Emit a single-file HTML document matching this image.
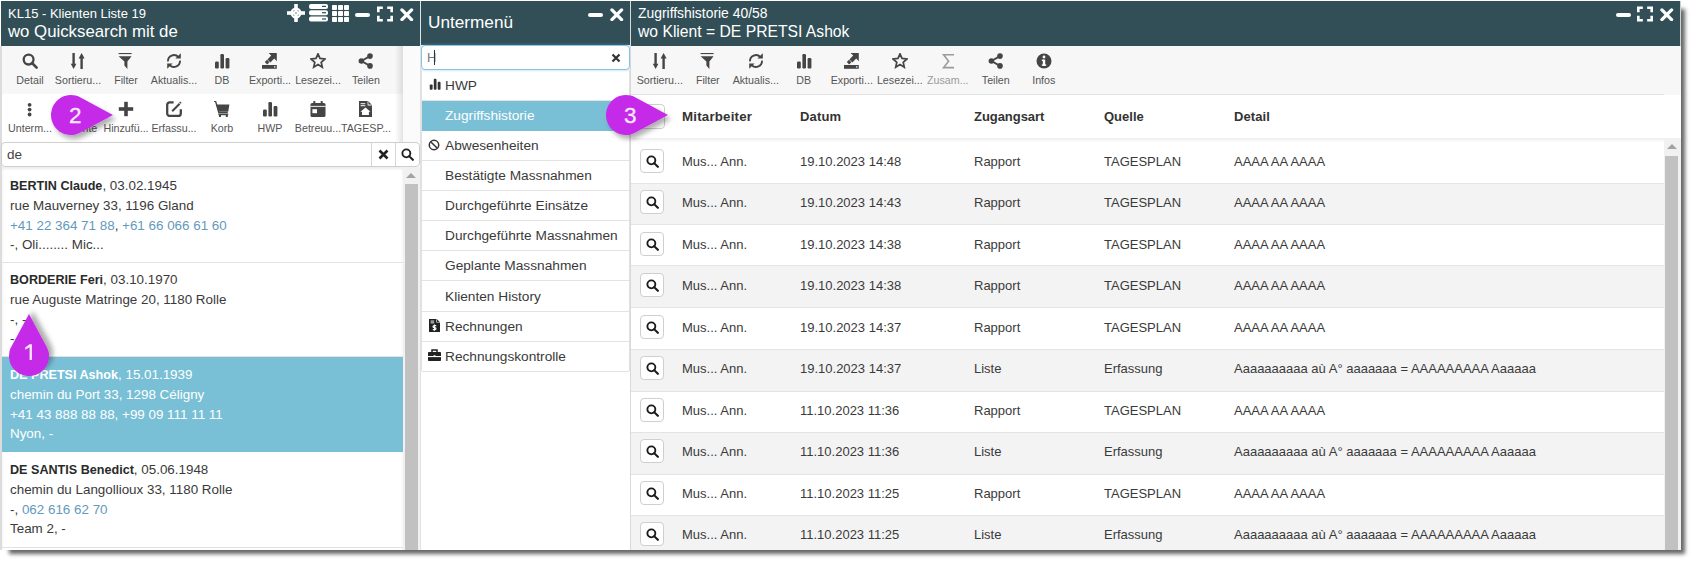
<!DOCTYPE html><html><head><meta charset="utf-8"><style>
*{box-sizing:border-box;margin:0;padding:0}
html,body{width:1696px;height:565px;overflow:hidden;background:#fff;font-family:"Liberation Sans",sans-serif}
.a{position:absolute}
.t{position:absolute;white-space:nowrap;line-height:1}
.lbl{position:absolute;width:60px;text-align:center;font-size:10.7px;line-height:12px;white-space:nowrap}
.li{position:absolute;left:10px;font-size:13.4px;line-height:19.4px;color:#3a3a3a;white-space:nowrap}
.li b{color:#2a2a2a;font-size:12.6px}
.lk{color:#6399bc}
.mi{position:absolute;left:0;width:207px;height:30.1px;border-bottom:1px solid #e3e3e3;font-size:13.7px;line-height:29px;color:#3a3a3a;padding-left:23px;white-space:nowrap}
.row{position:absolute;left:0;width:1034px;height:41.5px;border-bottom:1px solid #e4e4e4}
.cell{position:absolute;top:0;line-height:39px;font-size:13px;color:#3a3a3a;white-space:nowrap}
.btn{position:absolute;left:9px;top:6.8px;width:24px;height:24px;border:1px solid #cfcfcf;border-radius:4px;background:#fff}
.hd{position:absolute;top:0;line-height:43px;font-size:13.3px;font-weight:bold;color:#333;white-space:nowrap}
</style></head><body><div class="a" style="left:1px;top:1px;width:1680px;height:549px;box-shadow:6px 6px 4px -2px rgba(0,0,0,.6)"></div><div class="a" style="left:0;top:0;width:420px;height:550px;background:#fff;overflow:hidden"><div class="a" style="left:0;top:46px;width:2px;height:504px;background:#dcdcdc"></div><div class="a" style="left:1px;top:1px;width:419px;height:45px;background:#324f57"></div><div class="t" style="left:8px;top:7px;font-size:13px;color:#fff">KL15 - Klienten Liste 19</div><div class="t" style="left:8px;top:24px;font-size:16.8px;color:#fff">wo Quicksearch mit de</div><svg style="position:absolute;left:287px;top:4px;width:18px;height:18px;color:#fff;" viewBox="0 0 18 18" fill="currentColor"><rect x="7.2" y="0" width="3.6" height="18"/><rect x="0" y="7.2" width="18" height="3.6"/><circle cx="9" cy="9" r="4.4" fill="none" stroke="currentColor" stroke-width="2.2"/><circle cx="9" cy="9" r="0.7" fill="#324f57"/></svg><svg style="position:absolute;left:309px;top:4px;width:19px;height:18px;color:#fff;" viewBox="0 0 19 18" fill="currentColor"><rect x="0" y="0" width="19" height="5" rx="2"/><rect x="0" y="6.3" width="19" height="5" rx="2"/><rect x="0" y="12.6" width="19" height="5" rx="2"/><rect x="13" y="1.8" width="4" height="1.2" fill="#324f57"/><rect x="13" y="8.1" width="4" height="1.2" fill="#324f57"/><rect x="13" y="14.4" width="4" height="1.2" fill="#324f57"/></svg><svg style="position:absolute;left:332px;top:5px;width:17px;height:17px;color:#fff;" viewBox="0 0 17 17" fill="currentColor"><rect x="0" y="0" width="5" height="5" rx=".8"/><rect x="6" y="0" width="5" height="5" rx=".8"/><rect x="12" y="0" width="5" height="5" rx=".8"/><rect x="0" y="6" width="5" height="5" rx=".8"/><rect x="6" y="6" width="5" height="5" rx=".8"/><rect x="12" y="6" width="5" height="5" rx=".8"/><rect x="0" y="12" width="5" height="5" rx=".8"/><rect x="6" y="12" width="5" height="5" rx=".8"/><rect x="12" y="12" width="5" height="5" rx=".8"/></svg><div class="a" style="left:355px;top:13px;width:15px;height:4px;border-radius:2px;background:#fff"></div><svg style="position:absolute;left:377px;top:6px;width:16px;height:16px;color:#fff;" viewBox="0 0 17 16" fill="currentColor"><path d="M0 0h6.2v2.8H2.8V6.2H0zM10.8 0h6.2v6.2h-2.8V2.8h-3.4zM0 9.8h2.8v3.4h3.4V16H0zM14.2 9.8H17V16h-6.2v-2.8h3.4z"/></svg><svg style="position:absolute;left:400px;top:7.5px;width:13.5px;height:13.5px;color:#fff;" viewBox="0 0 14 14" fill="currentColor"><path d="M2 2L12 12M12 2L2 12" stroke="currentColor" stroke-width="3.4" stroke-linecap="round"/></svg><div class="a" style="left:2px;top:46px;width:401px;height:48px;background:#f7f7f7;"></div><div class="a" style="left:2px;top:94px;width:401px;height:48px;background:#fff;"></div><div class="a" style="left:403px;top:46px;width:17px;height:96px;background:#fbfbfb"></div><div class="a" style="left:395px;top:46px;width:8px;height:96px;background:linear-gradient(to right,rgba(0,0,0,0),rgba(0,0,0,.11))"></div><svg style="position:absolute;left:22.0px;top:53px;width:16px;height:16px;color:#454545;" viewBox="0 0 16 16" fill="currentColor"><circle cx="6.6" cy="6.6" r="4.9" fill="none" stroke="currentColor" stroke-width="2.3"/><path d="M10 10 L14.6 14.6" stroke="currentColor" stroke-width="2.6" stroke-linecap="round"/></svg><div class="lbl" style="left:0px;top:74px;color:#555">Detail</div><svg style="position:absolute;left:70.0px;top:53px;width:16px;height:16px;color:#454545;" viewBox="0 0 16 16" fill="currentColor"><path d="M3.6 0v11.5" stroke="currentColor" stroke-width="2.4"/><path d="M0.8 10.8h5.6L3.6 16z"/><path d="M11.6 16V4.5" stroke="currentColor" stroke-width="2.4"/><path d="M8.6 5.4h6L11.6 0z"/></svg><div class="lbl" style="left:48px;top:74px;color:#555">Sortieru...</div><svg style="position:absolute;left:118.0px;top:53px;width:16px;height:16px;color:#454545;" viewBox="0 0 16 16" fill="currentColor"><rect x="0.6" y="0" width="13" height="1.1"/><path d="M0.6 3.2h13L9.4 8.4V16L6.4 12.6V8.4z"/></svg><div class="lbl" style="left:96px;top:74px;color:#555">Filter</div><svg style="position:absolute;left:166.0px;top:53px;width:16px;height:16px;color:#454545;" viewBox="0 0 16 16" fill="currentColor"><path d="M2 8.4A6 6 0 0 1 12.3 3.9" fill="none" stroke="currentColor" stroke-width="1.9"/><path d="M14.8 0.2v5.4H9.4z"/><path d="M14 7.6A6 6 0 0 1 3.7 12.1" fill="none" stroke="currentColor" stroke-width="1.9"/><path d="M1.2 15.8v-5.4h5.4z"/></svg><div class="lbl" style="left:144px;top:74px;color:#555">Aktualis...</div><svg style="position:absolute;left:214.0px;top:53px;width:16px;height:16px;color:#454545;" viewBox="0 0 16 16" fill="currentColor"><rect x="1" y="8.5" width="3.8" height="7" rx="1.2"/><rect x="6.4" y="1" width="3.6" height="14.5" rx="1.2"/><rect x="11.6" y="5" width="3.8" height="10.5" rx="1.2"/></svg><div class="lbl" style="left:192px;top:74px;color:#555">DB</div><svg style="position:absolute;left:262.0px;top:53px;width:16px;height:16px;color:#454545;" viewBox="0 0 16 16" fill="currentColor"><path d="M0 12h14.8v3.8H0z"/><rect x="12" y="13.3" width="1.4" height="1.2" fill="#fff"/><path d="M6.6 0H14.8V8.2L12.2 5.6 8.4 9.4 5.4 6.4 9.2 2.6z"/><path d="M2.8 9l2.2-2.2 2.4 2.4-2.2 2.2z"/></svg><div class="lbl" style="left:240px;top:74px;color:#555">Exporti...</div><svg style="position:absolute;left:310.0px;top:53px;width:16px;height:16px;color:#454545;" viewBox="0 0 16 16" fill="currentColor"><path d="M8 0.8l2 4.6 5 .5-3.8 3.4 1.1 4.9L8 11.6l-4.3 2.6 1.1-4.9L1 5.9l5-.5z" fill="none" stroke="currentColor" stroke-width="1.7" stroke-linejoin="miter"/></svg><div class="lbl" style="left:288px;top:74px;color:#555">Lesezei...</div><svg style="position:absolute;left:358.0px;top:53px;width:16px;height:16px;color:#454545;" viewBox="0 0 16 16" fill="currentColor"><circle cx="12" cy="3.1" r="2.8"/><circle cx="3.4" cy="8" r="2.8"/><circle cx="12" cy="12.9" r="2.8"/><path d="M12 3.1L3.4 8l8.6 4.9" fill="none" stroke="currentColor" stroke-width="1.8"/></svg><div class="lbl" style="left:336px;top:74px;color:#555">Teilen</div><svg style="position:absolute;left:22.0px;top:100.8px;width:16px;height:16px;color:#454545;" viewBox="0 0 16 16" fill="currentColor"><circle cx="7.6" cy="3.8" r="1.9"/><circle cx="7.6" cy="8.6" r="1.9"/><circle cx="7.6" cy="13.5" r="1.9"/></svg><div class="lbl" style="left:0px;top:122px;color:#555">Unterm...</div><div class="lbl" style="left:48px;top:122px;color:#555">Favorite</div><svg style="position:absolute;left:118.0px;top:100.8px;width:16px;height:16px;color:#454545;" viewBox="0 0 16 16" fill="currentColor"><rect x="6.2" y="0.8" width="3.6" height="14.4"/><rect x="0.8" y="6.2" width="14.4" height="3.6"/></svg><div class="lbl" style="left:96px;top:122px;color:#555">Hinzufü...</div><svg style="position:absolute;left:166.0px;top:100.8px;width:16px;height:16px;color:#454545;" viewBox="0 0 16 16" fill="currentColor"><path d="M7.6 1.4H3.6A2.4 2.4 0 0 0 1.2 3.8v8.8A2.4 2.4 0 0 0 3.6 15h8.8a2.4 2.4 0 0 0 2.4-2.4V8.2" fill="none" stroke="currentColor" stroke-width="2.3"/><path d="M6.2 10.2L13.6 2.8" stroke="currentColor" stroke-width="2"/><path d="M14.2 0.4l1.4 1.4-1 1-1.4-1.4z"/></svg><div class="lbl" style="left:144px;top:122px;color:#555">Erfassu...</div><svg style="position:absolute;left:214.0px;top:100.8px;width:16px;height:16px;color:#454545;" viewBox="0 0 16 16" fill="currentColor"><path d="M0 0.4h1.6l3.2 11.2h9" fill="none" stroke="currentColor" stroke-width="1.4"/><path d="M2.2 3.4H15.4l-1.2 7.4H4.4z"/><rect x="4.4" y="12.6" width="9.8" height="1.6"/><rect x="5" y="14" width="2" height="2"/><rect x="11.8" y="14" width="2" height="2"/></svg><div class="lbl" style="left:192px;top:122px;color:#555">Korb</div><svg style="position:absolute;left:262.0px;top:100.8px;width:16px;height:16px;color:#454545;" viewBox="0 0 16 16" fill="currentColor"><rect x="1" y="8.5" width="3.8" height="7" rx="1.2"/><rect x="6.4" y="1" width="3.6" height="14.5" rx="1.2"/><rect x="11.6" y="5" width="3.8" height="10.5" rx="1.2"/></svg><div class="lbl" style="left:240px;top:122px;color:#555">HWP</div><svg style="position:absolute;left:310.0px;top:100.8px;width:16px;height:16px;color:#454545;" viewBox="0 0 16 16" fill="currentColor"><rect x="0.5" y="2" width="15" height="14" rx="1.6"/><rect x="3.3" y="0" width="2" height="3" rx=".6"/><rect x="10.7" y="0" width="2" height="3" rx=".6"/><rect x="0.5" y="4.9" width="15" height="0.9" fill="#fff"/><rect x="2.4" y="8.2" width="4.6" height="4" fill="#fff"/></svg><div class="lbl" style="left:288px;top:122px;color:#555">Betreuu...</div><svg style="position:absolute;left:358.0px;top:100.8px;width:16px;height:16px;color:#454545;" viewBox="0 0 16 16" fill="currentColor"><path d="M1 0h8.8L14 4.2V16H1z"/><path d="M9.6 0v4.4H14z" fill="#fff"/><path d="M10.4 0.6L13.4 3.6H10.4z"/><rect x="2.6" y="2.2" width="4.6" height="1" fill="#fff"/><rect x="2.6" y="4.2" width="4.6" height="1" fill="#fff"/><path d="M7.5 6.6l5 4.2h-1.6V14H4v-3.2H2.4z" fill="#fff"/></svg><div class="lbl" style="left:336px;top:122px;color:#555">TAGESP...</div><div class="a" style="left:1px;top:142px;width:419px;height:25px;border:1px solid #cfcfcf;border-radius:4px;background:#fff"></div><div class="a" style="left:371px;top:143px;width:1px;height:23px;background:#d6d6d6"></div><div class="a" style="left:395px;top:143px;width:1px;height:23px;background:#d6d6d6"></div><div class="t" style="left:7px;top:148px;font-size:13.5px;color:#444">de</div><svg style="position:absolute;left:378px;top:149px;width:11px;height:11px;color:#222;" viewBox="0 0 11 11" fill="currentColor"><path d="M1.5 1.5L9.5 9.5M9.5 1.5L1.5 9.5" stroke="currentColor" stroke-width="2.6"/></svg><svg style="position:absolute;left:401px;top:147.5px;width:13px;height:13px;color:#222;" viewBox="0 0 16 16" fill="currentColor"><circle cx="6.6" cy="6.6" r="4.9" fill="none" stroke="currentColor" stroke-width="2.3"/><path d="M10 10 L14.6 14.6" stroke="currentColor" stroke-width="2.6" stroke-linecap="round"/></svg><div class="a" style="left:2px;top:167px;width:401px;height:383px;background:#fff;box-shadow:inset 0 2px 3px rgba(0,0,0,.08)"></div><div class="a" style="left:403px;top:167px;width:17px;height:383px;background:#f1f1f1"></div><div class="a" style="left:406px;top:173px;width:0;height:0;border-left:5px solid transparent;border-right:5px solid transparent;border-bottom:5px solid #a3a3a3"></div><div class="a" style="left:405px;top:184px;width:13px;height:366px;background:#c1c1c1"></div><div class="li" style="top:176px"><b>BERTIN Claude</b>, 03.02.1945<br>rue Mauverney 33, 1196 Gland<br><span class="lk">+41 22 364 71 88</span>, <span class="lk">+61 66 066 61 60</span><br>-, Oli........ Mic...</div><div class="a" style="left:2px;top:262px;width:401px;height:1px;background:#e2e2e2"></div><div class="li" style="top:270px"><b>BORDERIE Feri</b>, 03.10.1970<br>rue Auguste Matringe 20, 1180 Rolle<br>-, -<br>-</div><div class="a" style="left:2px;top:356px;width:401px;height:1px;background:#e2e2e2"></div><div class="a" style="left:2px;top:357px;width:401px;height:95px;background:#79bfd6"></div><div class="li" style="top:365px;color:#fff"><b style='color:#fff'>DE PRETSI Ashok</b>, 15.01.1939<br>chemin du Port 33, 1298 Céligny<br>+41 43 888 88 88, +99 09 111 11 11<br>Nyon, -</div><div class="li" style="top:460px"><b>DE SANTIS Benedict</b>, 05.06.1948<br>chemin du Langollioux 33, 1180 Rolle<br>-, <span class="lk">062 616 62 70</span><br>Team 2, -</div><div class="a" style="left:2px;top:547px;width:401px;height:1px;background:#e2e2e2"></div></div><div class="a" style="left:420px;top:1px;width:1px;height:549px;background:#dfe3e5"></div><div class="a" style="left:421px;top:0;width:209px;height:550px;background:#fff;overflow:hidden"><div class="a" style="left:0;top:1px;width:209px;height:44px;background:#324f57"></div><div class="t" style="left:7px;top:14px;font-size:17.2px;color:#fff">Untermenü</div><div class="a" style="left:167px;top:13px;width:15px;height:4px;border-radius:2px;background:#fff"></div><svg style="position:absolute;left:189px;top:7.5px;width:13.5px;height:13.5px;color:#fff;" viewBox="0 0 14 14" fill="currentColor"><path d="M2 2L12 12M12 2L2 12" stroke="currentColor" stroke-width="3.4" stroke-linecap="round"/></svg><div class="a" style="left:0;top:45px;width:209px;height:25px;border:1px solid #8ac3dc;border-radius:4px;background:#fff;box-shadow:0 0 3px rgba(102,175,233,.6)"></div><div class="t" style="left:6px;top:51px;font-size:13px;color:#777">H</div><div class="a" style="left:13px;top:50px;width:1px;height:15px;background:#333"></div><svg style="position:absolute;left:190px;top:53px;width:10px;height:10px;color:#333;" viewBox="0 0 10 10" fill="currentColor"><path d="M1.5 1.5L8.5 8.5M8.5 1.5L1.5 8.5" stroke="currentColor" stroke-width="2.2"/></svg><div class="a" style="left:0;top:70px;width:209px;height:301px;border-left:1px solid #e0e0e0;border-right:1px solid #e0e0e0"></div><div class="mi" style="top:70.8px;left:1px;">HWP</div><div class="mi" style="top:100.9px;left:1px;background:#79bfd6;color:#fff;border-bottom:none;">Zugriffshistorie</div><div class="mi" style="top:131.0px;left:1px;">Abwesenheiten</div><div class="mi" style="top:161.10000000000002px;left:1px;">Bestätigte Massnahmen</div><div class="mi" style="top:191.2px;left:1px;">Durchgeführte Einsätze</div><div class="mi" style="top:221.3px;left:1px;">Durchgeführte Massnahmen</div><div class="mi" style="top:251.40000000000003px;left:1px;">Geplante Massnahmen</div><div class="mi" style="top:281.5px;left:1px;">Klienten History</div><div class="mi" style="top:311.6px;left:1px;">Rechnungen</div><div class="mi" style="top:341.70000000000005px;left:1px;">Rechnungskontrolle</div><svg style="position:absolute;left:8px;top:78px;width:12px;height:12px;color:#333;" viewBox="0 0 16 16" fill="currentColor"><rect x="1" y="8.5" width="3.8" height="7" rx="1.2"/><rect x="6.4" y="1" width="3.6" height="14.5" rx="1.2"/><rect x="11.6" y="5" width="3.8" height="10.5" rx="1.2"/></svg><svg style="position:absolute;left:7px;top:139px;width:12px;height:12px;color:#333;" viewBox="0 0 16 16" fill="currentColor"><circle cx="8" cy="8" r="6.3" fill="none" stroke="currentColor" stroke-width="2"/><path d="M3.6 3.6l8.8 8.8" stroke="currentColor" stroke-width="2"/></svg><svg style="position:absolute;left:7.5px;top:318.5px;width:11px;height:13px;color:#222;" viewBox="0 0 11 13" fill="currentColor"><path d="M0 0h7.6L11 3.4V13H0z"/><path d="M7.4 0v3.6H11z" fill="#fff"/><path d="M8 0.6l2.4 2.4H8z"/><rect x="1.6" y="1.6" width="3.6" height="0.9" fill="#fff"/><rect x="1.6" y="3.4" width="3.6" height="0.9" fill="#fff"/><path d="M5.5 5.4v6.4M7.2 6.6H5a1 1 0 0 0 0 2h1a1 1 0 0 1 0 2H3.8" stroke="#fff" stroke-width="1.1" fill="none"/></svg><svg style="position:absolute;left:6.5px;top:349px;width:13px;height:12px;color:#222;" viewBox="0 0 13 12" fill="currentColor"><rect x="0" y="3" width="13" height="9" rx="0.8"/><path d="M4 3.2V1h5v2.2" fill="none" stroke="currentColor" stroke-width="1.5"/><rect x="0" y="7" width="13" height="1.1" fill="#fff"/><rect x="5.6" y="6.2" width="1.8" height="1.8" fill="#fff"/></svg></div><div class="a" style="left:630px;top:1px;width:1px;height:549px;background:#d9d9d9"></div><div class="a" style="left:631px;top:0;width:1050px;height:550px;background:#fff;overflow:hidden"><div class="a" style="left:0;top:1px;width:1049px;height:45px;background:#324f57"></div><div class="a" style="left:1049px;top:1px;width:1px;height:45px;background:#c9d3d6"></div><div class="t" style="left:7px;top:7px;font-size:13.9px;color:#fff">Zugriffshistorie 40/58</div><div class="t" style="left:7px;top:24px;font-size:15.7px;color:#fff">wo Klient = DE PRETSI Ashok</div><div class="a" style="left:985px;top:13px;width:15px;height:4px;border-radius:2px;background:#fff"></div><svg style="position:absolute;left:1006px;top:6px;width:16px;height:16px;color:#fff;" viewBox="0 0 17 16" fill="currentColor"><path d="M0 0h6.2v2.8H2.8V6.2H0zM10.8 0h6.2v6.2h-2.8V2.8h-3.4zM0 9.8h2.8v3.4h3.4V16H0zM14.2 9.8H17V16h-6.2v-2.8h3.4z"/></svg><svg style="position:absolute;left:1029px;top:7.5px;width:13.5px;height:13.5px;color:#fff;" viewBox="0 0 14 14" fill="currentColor"><path d="M2 2L12 12M12 2L2 12" stroke="currentColor" stroke-width="3.4" stroke-linecap="round"/></svg><div class="a" style="left:0;top:46px;width:1033px;height:49px;background:#f7f7f7;border-bottom:1px solid #e4e4e4"></div><div class="a" style="left:1033px;top:46px;width:17px;height:49px;background:#f7f7f7"></div><svg style="position:absolute;left:20.8px;top:52.8px;width:16px;height:16px;color:#454545;" viewBox="0 0 16 16" fill="currentColor"><path d="M3.6 0v11.5" stroke="currentColor" stroke-width="2.4"/><path d="M0.8 10.8h5.6L3.6 16z"/><path d="M11.6 16V4.5" stroke="currentColor" stroke-width="2.4"/><path d="M8.6 5.4h6L11.6 0z"/></svg><div class="lbl" style="left:-1.1999999999999993px;top:74px;color:#555">Sortieru...</div><svg style="position:absolute;left:68.8px;top:52.8px;width:16px;height:16px;color:#454545;" viewBox="0 0 16 16" fill="currentColor"><rect x="0.6" y="0" width="13" height="1.1"/><path d="M0.6 3.2h13L9.4 8.4V16L6.4 12.6V8.4z"/></svg><div class="lbl" style="left:46.8px;top:74px;color:#555">Filter</div><svg style="position:absolute;left:116.8px;top:52.8px;width:16px;height:16px;color:#454545;" viewBox="0 0 16 16" fill="currentColor"><path d="M2 8.4A6 6 0 0 1 12.3 3.9" fill="none" stroke="currentColor" stroke-width="1.9"/><path d="M14.8 0.2v5.4H9.4z"/><path d="M14 7.6A6 6 0 0 1 3.7 12.1" fill="none" stroke="currentColor" stroke-width="1.9"/><path d="M1.2 15.8v-5.4h5.4z"/></svg><div class="lbl" style="left:94.8px;top:74px;color:#555">Aktualis...</div><svg style="position:absolute;left:164.8px;top:52.8px;width:16px;height:16px;color:#454545;" viewBox="0 0 16 16" fill="currentColor"><rect x="1" y="8.5" width="3.8" height="7" rx="1.2"/><rect x="6.4" y="1" width="3.6" height="14.5" rx="1.2"/><rect x="11.6" y="5" width="3.8" height="10.5" rx="1.2"/></svg><div class="lbl" style="left:142.8px;top:74px;color:#555">DB</div><svg style="position:absolute;left:212.8px;top:52.8px;width:16px;height:16px;color:#454545;" viewBox="0 0 16 16" fill="currentColor"><path d="M0 12h14.8v3.8H0z"/><rect x="12" y="13.3" width="1.4" height="1.2" fill="#fff"/><path d="M6.6 0H14.8V8.2L12.2 5.6 8.4 9.4 5.4 6.4 9.2 2.6z"/><path d="M2.8 9l2.2-2.2 2.4 2.4-2.2 2.2z"/></svg><div class="lbl" style="left:190.8px;top:74px;color:#555">Exporti...</div><svg style="position:absolute;left:260.8px;top:52.8px;width:16px;height:16px;color:#454545;" viewBox="0 0 16 16" fill="currentColor"><path d="M8 0.8l2 4.6 5 .5-3.8 3.4 1.1 4.9L8 11.6l-4.3 2.6 1.1-4.9L1 5.9l5-.5z" fill="none" stroke="currentColor" stroke-width="1.7" stroke-linejoin="miter"/></svg><div class="lbl" style="left:238.8px;top:74px;color:#555">Lesezei...</div><svg style="position:absolute;left:308.8px;top:52.8px;width:16px;height:16px;color:#9a9a9a;" viewBox="0 0 16 16" fill="currentColor"><path d="M14 1.8H3.6L8.6 8.2 3.6 14.6H14" fill="none" stroke="currentColor" stroke-width="1.6" stroke-linejoin="miter"/></svg><div class="lbl" style="left:286.8px;top:74px;color:#9a9a9a">Zusam...</div><svg style="position:absolute;left:356.8px;top:52.8px;width:16px;height:16px;color:#454545;" viewBox="0 0 16 16" fill="currentColor"><circle cx="12" cy="3.1" r="2.8"/><circle cx="3.4" cy="8" r="2.8"/><circle cx="12" cy="12.9" r="2.8"/><path d="M12 3.1L3.4 8l8.6 4.9" fill="none" stroke="currentColor" stroke-width="1.8"/></svg><div class="lbl" style="left:334.8px;top:74px;color:#555">Teilen</div><svg style="position:absolute;left:404.8px;top:52.8px;width:16px;height:16px;color:#454545;" viewBox="0 0 16 16" fill="currentColor"><circle cx="8" cy="8" r="7.5"/><rect x="6.8" y="6.6" width="2.4" height="6.2" fill="#fff"/><rect x="5.8" y="11.4" width="4.4" height="1.4" fill="#fff"/><rect x="5.8" y="6.6" width="2" height="1.4" fill="#fff"/><circle cx="8" cy="4" r="1.4" fill="#fff"/></svg><div class="lbl" style="left:382.8px;top:74px;color:#555">Infos</div><div class="row" style="top:142px;height:42px;background:#fff"></div><div class="row" style="top:184px;height:41px;background:#f3f3f3"></div><div class="row" style="top:225px;height:41px;background:#fff"></div><div class="row" style="top:266px;height:42px;background:#f3f3f3"></div><div class="row" style="top:308px;height:42px;background:#fff"></div><div class="row" style="top:350px;height:42px;background:#f3f3f3"></div><div class="row" style="top:392px;height:41px;background:#fff"></div><div class="row" style="top:433px;height:42px;background:#f3f3f3"></div><div class="row" style="top:475px;height:41px;background:#fff"></div><div class="row" style="top:516px;height:42px;background:#f3f3f3"></div><div class="btn" style="top:148.6px"><svg style="position:absolute;left:4.5px;top:5px;width:13px;height:13px;color:#1a1a1a;" viewBox="0 0 16 16" fill="currentColor"><circle cx="6.6" cy="6.6" r="4.9" fill="none" stroke="currentColor" stroke-width="2.3"/><path d="M10 10 L14.6 14.6" stroke="currentColor" stroke-width="2.6" stroke-linecap="round"/></svg></div><div class="cell" style="left:51px;top:141.9px">Mus... Ann.</div><div class="cell" style="left:169px;top:141.9px">19.10.2023 14:48</div><div class="cell" style="left:343px;top:141.9px">Rapport</div><div class="cell" style="left:473px;top:141.9px">TAGESPLAN</div><div class="cell" style="left:603px;top:141.9px">AAAA AA AAAA</div><div class="btn" style="top:190.1px"><svg style="position:absolute;left:4.5px;top:5px;width:13px;height:13px;color:#1a1a1a;" viewBox="0 0 16 16" fill="currentColor"><circle cx="6.6" cy="6.6" r="4.9" fill="none" stroke="currentColor" stroke-width="2.3"/><path d="M10 10 L14.6 14.6" stroke="currentColor" stroke-width="2.6" stroke-linecap="round"/></svg></div><div class="cell" style="left:51px;top:183.4px">Mus... Ann.</div><div class="cell" style="left:169px;top:183.4px">19.10.2023 14:43</div><div class="cell" style="left:343px;top:183.4px">Rapport</div><div class="cell" style="left:473px;top:183.4px">TAGESPLAN</div><div class="cell" style="left:603px;top:183.4px">AAAA AA AAAA</div><div class="btn" style="top:231.6px"><svg style="position:absolute;left:4.5px;top:5px;width:13px;height:13px;color:#1a1a1a;" viewBox="0 0 16 16" fill="currentColor"><circle cx="6.6" cy="6.6" r="4.9" fill="none" stroke="currentColor" stroke-width="2.3"/><path d="M10 10 L14.6 14.6" stroke="currentColor" stroke-width="2.6" stroke-linecap="round"/></svg></div><div class="cell" style="left:51px;top:224.9px">Mus... Ann.</div><div class="cell" style="left:169px;top:224.9px">19.10.2023 14:38</div><div class="cell" style="left:343px;top:224.9px">Rapport</div><div class="cell" style="left:473px;top:224.9px">TAGESPLAN</div><div class="cell" style="left:603px;top:224.9px">AAAA AA AAAA</div><div class="btn" style="top:273.1px"><svg style="position:absolute;left:4.5px;top:5px;width:13px;height:13px;color:#1a1a1a;" viewBox="0 0 16 16" fill="currentColor"><circle cx="6.6" cy="6.6" r="4.9" fill="none" stroke="currentColor" stroke-width="2.3"/><path d="M10 10 L14.6 14.6" stroke="currentColor" stroke-width="2.6" stroke-linecap="round"/></svg></div><div class="cell" style="left:51px;top:266.4px">Mus... Ann.</div><div class="cell" style="left:169px;top:266.4px">19.10.2023 14:38</div><div class="cell" style="left:343px;top:266.4px">Rapport</div><div class="cell" style="left:473px;top:266.4px">TAGESPLAN</div><div class="cell" style="left:603px;top:266.4px">AAAA AA AAAA</div><div class="btn" style="top:314.6px"><svg style="position:absolute;left:4.5px;top:5px;width:13px;height:13px;color:#1a1a1a;" viewBox="0 0 16 16" fill="currentColor"><circle cx="6.6" cy="6.6" r="4.9" fill="none" stroke="currentColor" stroke-width="2.3"/><path d="M10 10 L14.6 14.6" stroke="currentColor" stroke-width="2.6" stroke-linecap="round"/></svg></div><div class="cell" style="left:51px;top:307.9px">Mus... Ann.</div><div class="cell" style="left:169px;top:307.9px">19.10.2023 14:37</div><div class="cell" style="left:343px;top:307.9px">Rapport</div><div class="cell" style="left:473px;top:307.9px">TAGESPLAN</div><div class="cell" style="left:603px;top:307.9px">AAAA AA AAAA</div><div class="btn" style="top:356.1px"><svg style="position:absolute;left:4.5px;top:5px;width:13px;height:13px;color:#1a1a1a;" viewBox="0 0 16 16" fill="currentColor"><circle cx="6.6" cy="6.6" r="4.9" fill="none" stroke="currentColor" stroke-width="2.3"/><path d="M10 10 L14.6 14.6" stroke="currentColor" stroke-width="2.6" stroke-linecap="round"/></svg></div><div class="cell" style="left:51px;top:349.4px">Mus... Ann.</div><div class="cell" style="left:169px;top:349.4px">19.10.2023 14:37</div><div class="cell" style="left:343px;top:349.4px">Liste</div><div class="cell" style="left:473px;top:349.4px">Erfassung</div><div class="cell" style="left:603px;top:349.4px">Aaaaaaaaaa aù A° aaaaaaa = AAAAAAAAA Aaaaaa</div><div class="btn" style="top:397.6px"><svg style="position:absolute;left:4.5px;top:5px;width:13px;height:13px;color:#1a1a1a;" viewBox="0 0 16 16" fill="currentColor"><circle cx="6.6" cy="6.6" r="4.9" fill="none" stroke="currentColor" stroke-width="2.3"/><path d="M10 10 L14.6 14.6" stroke="currentColor" stroke-width="2.6" stroke-linecap="round"/></svg></div><div class="cell" style="left:51px;top:390.9px">Mus... Ann.</div><div class="cell" style="left:169px;top:390.9px">11.10.2023 11:36</div><div class="cell" style="left:343px;top:390.9px">Rapport</div><div class="cell" style="left:473px;top:390.9px">TAGESPLAN</div><div class="cell" style="left:603px;top:390.9px">AAAA AA AAAA</div><div class="btn" style="top:439.1px"><svg style="position:absolute;left:4.5px;top:5px;width:13px;height:13px;color:#1a1a1a;" viewBox="0 0 16 16" fill="currentColor"><circle cx="6.6" cy="6.6" r="4.9" fill="none" stroke="currentColor" stroke-width="2.3"/><path d="M10 10 L14.6 14.6" stroke="currentColor" stroke-width="2.6" stroke-linecap="round"/></svg></div><div class="cell" style="left:51px;top:432.4px">Mus... Ann.</div><div class="cell" style="left:169px;top:432.4px">11.10.2023 11:36</div><div class="cell" style="left:343px;top:432.4px">Liste</div><div class="cell" style="left:473px;top:432.4px">Erfassung</div><div class="cell" style="left:603px;top:432.4px">Aaaaaaaaaa aù A° aaaaaaa = AAAAAAAAA Aaaaaa</div><div class="btn" style="top:480.6px"><svg style="position:absolute;left:4.5px;top:5px;width:13px;height:13px;color:#1a1a1a;" viewBox="0 0 16 16" fill="currentColor"><circle cx="6.6" cy="6.6" r="4.9" fill="none" stroke="currentColor" stroke-width="2.3"/><path d="M10 10 L14.6 14.6" stroke="currentColor" stroke-width="2.6" stroke-linecap="round"/></svg></div><div class="cell" style="left:51px;top:473.9px">Mus... Ann.</div><div class="cell" style="left:169px;top:473.9px">11.10.2023 11:25</div><div class="cell" style="left:343px;top:473.9px">Rapport</div><div class="cell" style="left:473px;top:473.9px">TAGESPLAN</div><div class="cell" style="left:603px;top:473.9px">AAAA AA AAAA</div><div class="btn" style="top:522.1px"><svg style="position:absolute;left:4.5px;top:5px;width:13px;height:13px;color:#1a1a1a;" viewBox="0 0 16 16" fill="currentColor"><circle cx="6.6" cy="6.6" r="4.9" fill="none" stroke="currentColor" stroke-width="2.3"/><path d="M10 10 L14.6 14.6" stroke="currentColor" stroke-width="2.6" stroke-linecap="round"/></svg></div><div class="cell" style="left:51px;top:515.4px">Mus... Ann.</div><div class="cell" style="left:169px;top:515.4px">11.10.2023 11:25</div><div class="cell" style="left:343px;top:515.4px">Liste</div><div class="cell" style="left:473px;top:515.4px">Erfassung</div><div class="cell" style="left:603px;top:515.4px">Aaaaaaaaaa aù A° aaaaaaa = AAAAAAAAA Aaaaaa</div><div class="a" style="left:0;top:95px;width:1034px;height:43px;background:#fff;box-shadow:0 2px 3px rgba(0,0,0,.08)"></div><div class="a" style="left:9px;top:103.5px;width:25px;height:25px;border:1px solid #cfcfcf;border-radius:4px;background:#fff"></div><div class="hd" style="left:51px;top:95px;font-size:13.3px;letter-spacing:0.2px">Mitarbeiter</div><div class="hd" style="left:169px;top:95px;font-size:13px;letter-spacing:0.15px">Datum</div><div class="hd" style="left:343px;top:95px;font-size:13px;letter-spacing:-0.05px">Zugangsart</div><div class="hd" style="left:473px;top:95px;font-size:13px;letter-spacing:0px">Quelle</div><div class="hd" style="left:603px;top:95px;font-size:13px;letter-spacing:0.1px">Detail</div><div class="a" style="left:1033px;top:95px;width:17px;height:43px;background:#fff"></div><div class="a" style="left:1033px;top:138px;width:17px;height:412px;background:#f1f1f1"></div><div class="a" style="left:1036px;top:144px;width:0;height:0;border-left:5px solid transparent;border-right:5px solid transparent;border-bottom:5px solid #a3a3a3"></div><div class="a" style="left:1034px;top:156px;width:13px;height:394px;background:#c1c1c1"></div></div><svg style="position:absolute;left:11px;top:55px;width:120px;height:120px;overflow:visible" viewBox="-60 -60 120 120"><defs><filter id="sh2" x="-50%" y="-50%" width="200%" height="200%"><feGaussianBlur in="SourceAlpha" stdDeviation="2.6"/><feOffset dx="2.5" dy="3.5"/><feComponentTransfer><feFuncA type="linear" slope=".32"/></feComponentTransfer><feMerge><feMergeNode/><feMergeNode in="SourceGraphic"/></feMerge></filter></defs><path d="M42 0 L9.52 17.59 A20 20 0 1 1 9.52 -17.59 Z" fill="#c52ae8" transform="rotate(0)" filter="url(#sh2)"/></svg><svg style="position:absolute;left:-31px;top:296px;width:120px;height:120px;overflow:visible" viewBox="-60 -60 120 120"><defs><filter id="sh1" x="-50%" y="-50%" width="200%" height="200%"><feGaussianBlur in="SourceAlpha" stdDeviation="2.6"/><feOffset dx="2.5" dy="3.5"/><feComponentTransfer><feFuncA type="linear" slope=".32"/></feComponentTransfer><feMerge><feMergeNode/><feMergeNode in="SourceGraphic"/></feMerge></filter></defs><path d="M42 0 L9.52 17.59 A20 20 0 1 1 9.52 -17.59 Z" fill="#c52ae8" transform="rotate(-90)" filter="url(#sh1)"/></svg><svg style="position:absolute;left:566px;top:55px;width:120px;height:120px;overflow:visible" viewBox="-60 -60 120 120"><defs><filter id="sh3" x="-50%" y="-50%" width="200%" height="200%"><feGaussianBlur in="SourceAlpha" stdDeviation="2.6"/><feOffset dx="2.5" dy="3.5"/><feComponentTransfer><feFuncA type="linear" slope=".32"/></feComponentTransfer><feMerge><feMergeNode/><feMergeNode in="SourceGraphic"/></feMerge></filter></defs><path d="M42 0 L9.52 17.59 A20 20 0 1 1 9.52 -17.59 Z" fill="#c52ae8" transform="rotate(0)" filter="url(#sh3)"/></svg><div class="t" style="left:69px;top:104.5px;font-size:22.5px;color:#fce8ff;-webkit-text-stroke:.3px #fce8ff">2</div><svg style="position:absolute;left:24px;top:344px;width:8px;height:16px;color:#fce8ff;" viewBox="0 0 8 16" fill="currentColor"><path d="M5.6 0.2h2.3V16H5.6V3.2L1.2 5.8V3.4z"/></svg><div class="t" style="left:624px;top:104.5px;font-size:22.5px;color:#fce8ff;-webkit-text-stroke:.3px #fce8ff">3</div></body></html>
